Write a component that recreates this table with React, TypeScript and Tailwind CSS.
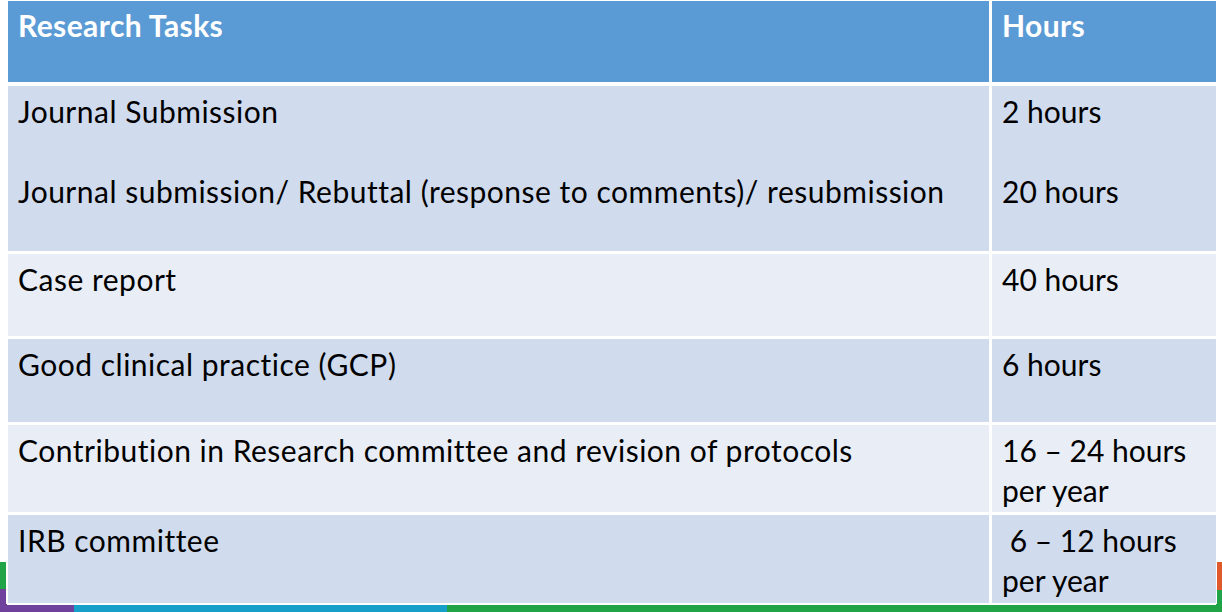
import React from "react";

interface Row {
  task: React.ReactNode;
  hours: React.ReactNode;
  height: string;
  shade: "dark" | "light";
}

const rows: Row[] = [
  {
    task: (
      <>
        <div>Journal Submission</div>
        <div>&nbsp;</div>
        <div>Journal submission/ Rebuttal (response to comments)/ resubmission</div>
      </>
    ),
    hours: (
      <>
        <div>2 hours</div>
        <div>&nbsp;</div>
        <div>20 hours</div>
      </>
    ),
    height: "h-[165px]",
    shade: "dark",
  },
  { task: "Case report", hours: "40 hours", height: "h-[82px]", shade: "light" },
  { task: "Good clinical practice (GCP)", hours: "6 hours", height: "h-[83px]", shade: "dark" },
  {
    task: "Contribution in Research committee and revision of protocols",
    hours: (
      <>
        <div>16 – 24 hours</div>
        <div>per year</div>
      </>
    ),
    height: "h-[87px]",
    shade: "light",
  },
  {
    task: "IRB committee",
    hours: (
      <>
        <div>&nbsp;6 – 12 hours</div>
        <div>per year</div>
      </>
    ),
    height: "h-[88px]",
    shade: "dark",
  },
];

export default function App() {
  return (
    <div className="relative w-[1222px] h-[612px] overflow-hidden bg-white font-['Lato','Open_Sans',sans-serif] text-black [font-variant-ligatures:none]">
      {/* slide decoration behind the table */}
      <div className="absolute left-0 top-[562px] w-[7px] h-[27px] bg-[#21a347]" />
      <div className="absolute left-0 top-[589px] w-[7px] h-[23px] bg-[#6f409c]" />
      <div className="absolute right-0 top-[562px] w-[6px] h-[28px] bg-[#e0592a]" />
      <div className="absolute right-0 top-[590px] w-[6px] h-[22px] bg-[#21a347]" />
      <div className="absolute left-0 bottom-0 w-full h-[7px] flex">
        <div className="w-[74px] bg-[#6f409c]" />
        <div className="w-[373px] bg-[#16a0c9]" />
        <div className="flex-1 bg-[#21a347]" />
      </div>

      <div className="relative ml-[6px] w-[1211px] bg-white px-[2px] pt-[1px] pb-[1px]">
        <div className="grid grid-cols-[981px_224px] gap-x-[3px] h-[81px] mb-[4px] bg-white text-white font-bold text-[30px] leading-[40px] tracking-[0.4px]">
          <div className="bg-[#5b9bd5] pl-[10px] pt-[4px]">Research Tasks</div>
          <div className="bg-[#5b9bd5] pl-[10px] pt-[4px]">Hours</div>
        </div>
        <div className="flex flex-col gap-[3px]">
          {rows.map((row, i) => (
            <div
              key={i}
              className={`grid grid-cols-[981px_224px] gap-x-[3px] ${row.height} text-[30px] leading-[40px]`}
            >
              <div className={`pl-[10px] pt-[5px] tracking-[0.5px] ${row.shade === "dark" ? "bg-[#d0dbed]" : "bg-[#e9edf5]"}`}>
                {row.task}
              </div>
              <div className={`pl-[10px] pt-[5px] ${row.shade === "dark" ? "bg-[#d0dbed]" : "bg-[#e9edf5]"}`}>
                {row.hours}
              </div>
            </div>
          ))}
        </div>
      </div>
    </div>
  );
}
